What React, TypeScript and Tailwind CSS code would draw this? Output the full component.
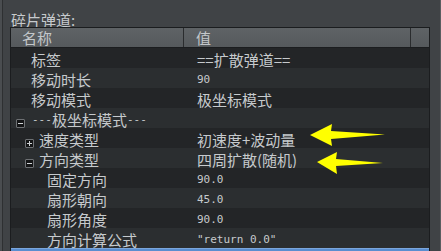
import React from "react";

const CJK = /[\u3000-\u9fff\uff00-\uffef]/;

function T({ s }: { s: string }) {
  if (CJK.test(s)) {
    const parts: { mono: boolean; t: string }[] = [];
    for (const ch of s) {
      const m = ch === "-";
      const last = parts[parts.length - 1];
      if (last && last.mono === m) last.t += ch;
      else parts.push({ mono: m, t: ch });
    }
    return (
      <>
        {parts.map((p, i) =>
          p.mono ? (
            <span key={i} className="text-[11px] [font-family:'DejaVu_Sans_Mono',monospace]">{p.t}</span>
          ) : (
            <span key={i} className="text-[15px] [font-family:'Noto_Sans_CJK_SC',sans-serif]">{p.t}</span>
          )
        )}
      </>
    );
  }
  return (
    <span className="text-[11px] [font-family:'DejaVu_Sans_Mono',monospace]">{s}</span>
  );
}

function Box({ plus }: { plus?: boolean }) {
  return (
    <span className="relative inline-block w-[9px] h-[9px] bg-[#141516] border border-[#6e7174] rounded-[1px] shrink-0">
      <span className="absolute left-[1px] top-[3px] w-[5px] h-[1px] bg-[#d0d3d6]" />
      {plus && <span className="absolute left-[3px] top-[1px] w-[1px] h-[5px] bg-[#d0d3d6]" />}
    </span>
  );
}

type Row = { name: string; value: string; indent: number; box?: "plus" | "minus"; boxX?: number };

const rows: Row[] = [
  { name: "标签", value: "==扩散弹道==", indent: 20 },
  { name: "移动时长", value: "90", indent: 20 },
  { name: "移动模式", value: "极坐标模式", indent: 20 },
  { name: "---极坐标模式---", value: "", indent: 21, box: "minus", boxX: 5 },
  { name: "速度类型", value: "初速度+波动量", indent: 28, box: "plus", boxX: 14 },
  { name: "方向类型", value: "四周扩散(随机)", indent: 28, box: "minus", boxX: 14 },
  { name: "固定方向", value: "90.0", indent: 36 },
  { name: "扇形朝向", value: "45.0", indent: 36 },
  { name: "扇形角度", value: "90.0", indent: 36 },
  { name: "方向计算公式", value: "\"return 0.0\"", indent: 36 },
];

export default function App() {
  return (
    <div className="relative w-[441px] h-[251px] overflow-hidden bg-[#404346] text-[#c6cacd] flex">
      <div className="w-[3px] h-full bg-[#4a4d50] border-r border-[#2e3032]" />
      <div className="flex-1 flex flex-col pl-[7px]">
        <div className="h-[27px] pt-[12px] leading-[15px] pl-[1px] text-[#c6cacd]">
          <T s="碎片弹道:" />
        </div>
        <div className="w-[420px] border border-[#1b1d1f] border-b-0 flex flex-col">
          <div className="h-[20px] flex bg-gradient-to-b from-[#5f6366] to-[#55595c] border-b border-[#1b1d1f] text-[#c3c7ca]">
            <div className="w-[173px] border-r border-[#2a2c2e] pl-[11px] pt-[1px] leading-[18px]">
              <T s="名称" />
            </div>
            <div className="w-[227px] border-r border-[#2a2c2e] pl-[12px] pt-[1px] leading-[18px]">
              <T s="值" />
            </div>
            <div className="flex-1" />
          </div>
          {rows.map((r, i) => (
            <div
              key={i}
              className={`h-[20px] flex ${i % 2 === 0 ? "bg-[#232527]" : "bg-[#2b2e30]"}`}
            >
              <div className="w-[173px] relative flex items-center pt-[3px] leading-[17px] whitespace-nowrap" style={{ paddingLeft: r.indent }}>
                {r.box && (
                  <span className="absolute top-[6px]" style={{ left: r.boxX }}>
                    <Box plus={r.box === "plus"} />
                  </span>
                )}
                <T s={r.name} />
              </div>
              <div className="flex-1 flex items-center pt-[3px] pl-[13px] leading-[17px] whitespace-nowrap">
                <T s={r.value} />
              </div>
            </div>
          ))}
          <div className="h-[4px] bg-[#5a8ed0] border-t border-[#7aa6dc]" />
        </div>
      </div>
      <div className="w-[1px] h-full bg-[#5a5d60]" />
      <svg className="absolute left-0 top-0 pointer-events-none" width="441" height="251">
        <path d="M310 135 L332 124 L331 131 L385 134.5 L331 139 L332 146 Z" fill="#ffff00" />
        <path d="M317 162 L337 152 L336 159 L383 163 L336 166 L337 174 Z" fill="#ffff00" />
      </svg>
    </div>
  );
}
